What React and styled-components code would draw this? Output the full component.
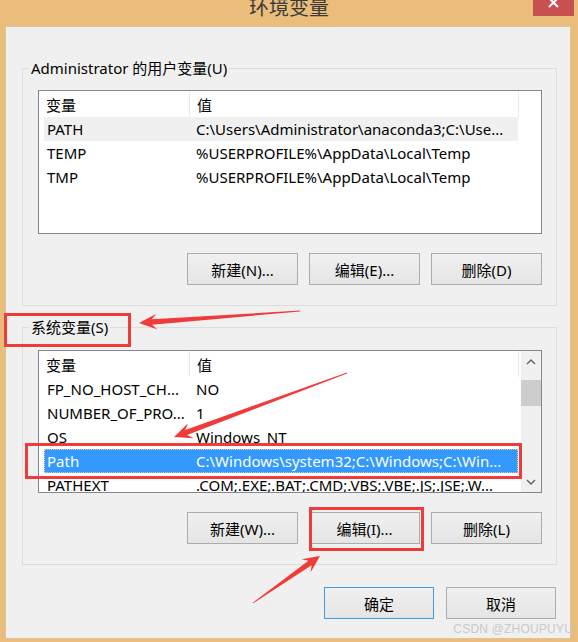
import React from "react";
import styled, { createGlobalStyle } from "styled-components";

const GlobalStyle = createGlobalStyle`
  * {
    box-sizing: border-box;
  }

  html, body {
    margin: 0;
    padding: 0;
  }

  body {
    background: #ebbd7a;
    color: #000;
    font-family: "Noto Sans", "Noto Sans CJK SC", sans-serif;
    font-size: 15px;
  }
`;

const settings = {
  colors: {
    frame: "#ebbd7a",
    face: "#f0f0f0",
    listBorder: "#828790",
    groupBorder: "#dcdcdc",
    select: "#3399ff",
    mark: "#f03b3b"
  }
};

const Page = styled.div`
  position: relative;
  width: 578px;
  height: 642px;
  display: flex;
  flex-direction: column;
  overflow: hidden;
`;

const TitleBar = styled.header`
  height: 26px;
  display: grid;
  grid-template-columns: 1fr auto 1fr;
  align-items: start;
  overflow: hidden;
`;

const Title = styled.h1`
  grid-column: 2;
  margin: -5px 0 0;
  font: 400 20px/24px "Noto Sans CJK SC", sans-serif;
  color: #3a3a3a;
`;

const CloseButton = styled.div`
  grid-column: 3;
  justify-self: end;
  width: 41px;
  height: 16px;
  margin-right: 4px;
  background: #c75050;
`;

const Window = styled.main`
  flex: 1;
  margin: 0 7px 3px 5px;
  padding: 31px 13px 0 16px;
  background: ${settings.colors.face};
  border: 1px solid #dcc49c;
  display: flex;
  flex-direction: column;
`;

const GroupBox = styled.fieldset`
  margin: ${p => p.$gap}px 0 0;
  padding: ${p => p.$top}px 14px 20px 15px;
  border: 1px solid ${settings.colors.groupBorder};
  min-width: 0;
`;

const Legend = styled.legend`
  margin-left: -9px;
  padding: 0 2px;
  font-size: 15px;
  line-height: 20px;
`;

const ListView = styled.div`
  display: flex;
  height: ${p => p.$height}px;
  border: 1px solid ${settings.colors.listBorder};
  background: #fff;
  overflow: hidden;
`;

const ListBody = styled.div`
  flex: 1;
  min-width: 0;
  display: flex;
  flex-direction: column;
`;

const HeaderRow = styled.div`
  display: grid;
  grid-template-columns: 151px 329px 1fr;
  height: 26px;
  flex-shrink: 0;
`;

const HeaderCell = styled.div`
  padding: 2px 0 0 7px;
  line-height: 24px;
  border-right: 1px solid #e3ebf5;
  white-space: nowrap;

  &:last-child {
    border-right: none;
  }
`;

const Row = styled.div`
  display: grid;
  grid-template-columns: 145px 329px;
  width: 474px;
  margin-left: 5px;
  height: 24px;
  flex-shrink: 0;
  line-height: 24px;
  white-space: nowrap;
  background: ${p =>
    p.$state === "active" ? settings.colors.select : p.$state === "inactive" ? "#f0f0f0" : "transparent"};
  color: ${p => (p.$state === "active" ? "#fff" : "#000")};
  outline: ${p => (p.$state === "active" ? "1px dotted #f3c58a" : "none")};
  outline-offset: -1px;
`;

const Cell = styled.span`
  padding-left: ${p => (p.$value ? 7 : 3)}px;
  overflow: hidden;
`;

const ScrollBar = styled.div`
  width: 20px;
  flex-shrink: 0;
  background: ${settings.colors.face};
  display: flex;
  flex-direction: column;
  align-items: stretch;
`;

const ScrollArrow = styled.div`
  height: 21px;
  display: flex;
  align-items: center;
  justify-content: center;
`;

const ScrollTrack = styled.div`
  flex: 1;
  padding-top: 8px;
`;

const Thumb = styled.div`
  height: 26px;
  background: #cdcdcd;
`;

const ButtonRow = styled.div`
  display: flex;
  justify-content: flex-end;
  gap: ${p => p.$gap || 11}px;
  margin-top: ${p => p.$top || 19}px;
  margin-right: ${p => p.$right || 0}px;
`;

const Button = styled.div`
  width: ${p => p.$width || 111}px;
  height: 32px;
  border: 1px solid ${p => (p.$primary ? "#3c9de8" : "#acacac")};
  background: linear-gradient(#f0f0f0, #e5e5e5);
  display: flex;
  align-items: center;
  justify-content: center;
  font-size: 15px;
  white-space: nowrap;
`;

const Overlay = styled.svg`
  position: absolute;
  inset: 0;
  pointer-events: none;
`;

const Watermark = styled.div`
  position: absolute;
  right: 5px;
  bottom: 6px;
  font: 12px/14px "Liberation Sans", sans-serif;
  color: #c9c9c9;
  letter-spacing: 0.2px;
`;

const userVars = [
  ["PATH", "C:\\Users\\Administrator\\anaconda3;C:\\Use...", "inactive"],
  ["TEMP", "%USERPROFILE%\\AppData\\Local\\Temp"],
  ["TMP", "%USERPROFILE%\\AppData\\Local\\Temp"]
];

const systemVars = [
  ["FP_NO_HOST_CH...", "NO"],
  ["NUMBER_OF_PRO...", "1"],
  ["OS", "Windows_NT"],
  ["Path", "C:\\Windows\\system32;C:\\Windows;C:\\Win...", "active"],
  ["PATHEXT", ".COM;.EXE;.BAT;.CMD;.VBS;.VBE;.JS;.JSE;.W..."]
];

// tapered annotation arrow from tail (tx,ty) to tip (px,py)
const arrowPoints = (tx, ty, px, py, head = 17, wing = 8, shaft = 2.8) => {
  const len = Math.hypot(px - tx, py - ty);
  const ux = (px - tx) / len;
  const uy = (py - ty) / len;
  const nx = -uy;
  const ny = ux;
  const bx = px - ux * head * 0.72;
  const by = py - uy * head * 0.72;
  const wx = px - ux * head;
  const wy = py - uy * head;
  const pts = [
    [tx + nx * 0.4, ty + ny * 0.4],
    [bx + nx * shaft, by + ny * shaft],
    [wx + nx * wing, wy + ny * wing],
    [px, py],
    [wx - nx * wing, wy - ny * wing],
    [bx - nx * shaft, by - ny * shaft],
    [tx - nx * 0.4, ty - ny * 0.4]
  ];
  return pts.map(p => p.map(v => v.toFixed(1)).join(",")).join(" ");
};

const Chevron = ({ down }) => (
  <svg width="10" height="6" viewBox="0 0 10 6">
    <polyline
      points={down ? "1,1 5,5 9,1" : "1,5 5,1 9,5"}
      fill="none"
      stroke="#606060"
      strokeWidth="1.4"
    />
  </svg>
);

const VarList = ({ rows, height, scroll }) => (
  <ListView $height={height}>
    <ListBody>
      <HeaderRow>
        <HeaderCell>变量</HeaderCell>
        <HeaderCell>值</HeaderCell>
        <HeaderCell />
      </HeaderRow>
      {rows.map(([name, value, state]) => (
        <Row key={name} $state={state}>
          <Cell>{name}</Cell>
          <Cell $value>{value}</Cell>
        </Row>
      ))}
    </ListBody>
    {scroll && (
      <ScrollBar>
        <ScrollArrow>
          <Chevron />
        </ScrollArrow>
        <ScrollTrack>
          <Thumb />
        </ScrollTrack>
        <ScrollArrow>
          <Chevron down />
        </ScrollArrow>
      </ScrollBar>
    )}
  </ListView>
);

export default function App() {
  const red = settings.colors.mark;
  return (
    <Page>
      <GlobalStyle />
      <TitleBar>
        <Title>环境变量</Title>
        <CloseButton>
          <svg width="41" height="16" viewBox="0 0 41 16">
            <path d="M16 -2 L25 7 M25 -2 L16 7" stroke="#fff" strokeWidth="2" />
          </svg>
        </CloseButton>
      </TitleBar>
      <Window>
        <GroupBox $gap={0} $top={12}>
          <Legend>Administrator 的用户变量(U)</Legend>
          <VarList rows={userVars} height={144} />
          <ButtonRow>
            <Button>新建(N)...</Button>
            <Button>编辑(E)...</Button>
            <Button>删除(D)</Button>
          </ButtonRow>
        </GroupBox>
        <GroupBox $gap={11} $top={13}>
          <Legend>系统变量(S)</Legend>
          <VarList rows={systemVars} height={143} scroll />
          <ButtonRow>
            <Button>新建(W)...</Button>
            <Button>编辑(I)...</Button>
            <Button>删除(L)</Button>
          </ButtonRow>
        </GroupBox>
        <ButtonRow $top={22} $gap={12} $right={1}>
          <Button $width={110} $primary>
            确定
          </Button>
          <Button $width={110}>取消</Button>
        </ButtonRow>
      </Window>
      <Overlay width="578" height="642" viewBox="0 0 578 642">
        <g fill="none" stroke={red} strokeWidth="3">
          <rect x="5.5" y="314.5" width="124" height="31" />
          <rect x="26.5" y="444.5" width="494" height="33" />
          <rect x="310.5" y="508.5" width="112" height="41" />
        </g>
        <g fill={red}>
          <polygon points={arrowPoints(300, 311, 139, 323, 18, 8, 2.8)} />
          <polygon points={arrowPoints(347, 373, 174, 437, 18, 8, 2.8)} />
          <polygon points={arrowPoints(253, 603, 320, 556, 17, 8, 2.8)} />
        </g>
      </Overlay>
      <Watermark>CSDN @ZHOUPUYU</Watermark>
    </Page>
  );
}
